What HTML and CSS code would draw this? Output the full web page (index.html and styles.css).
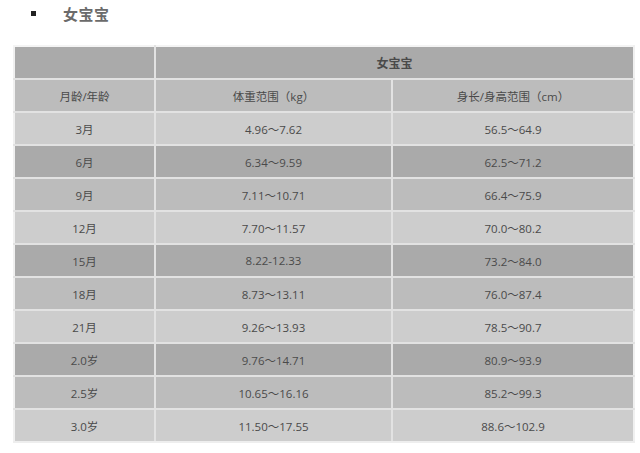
FILE: index.html
```html
<!DOCTYPE html>
<html>
<head>
<meta charset="utf-8">
<link rel="stylesheet" href="styles.css">
</head>
<body>
<div class="title"><span class="bullet"></span><span class="title-text">女宝宝</span></div>
<table class="data">
<colgroup><col class="c1"><col class="c2"><col class="c3"></colgroup>
<tr class="dark"><td></td><td colspan="2" class="bold">女宝宝</td></tr>
<tr class="mid"><td>月龄/年龄</td><td>体重范围（kg）</td><td>身长/身高范围（cm）</td></tr>
<tr class="light"><td>3月</td><td>4.96～7.62</td><td>56.5～64.9</td></tr>
<tr class="dark"><td>6月</td><td>6.34～9.59</td><td>62.5～71.2</td></tr>
<tr class="mid"><td>9月</td><td>7.11～10.71</td><td>66.4～75.9</td></tr>
<tr class="light"><td>12月</td><td>7.70～11.57</td><td>70.0～80.2</td></tr>
<tr class="dark"><td>15月</td><td>8.22-12.33</td><td>73.2～84.0</td></tr>
<tr class="mid"><td>18月</td><td>8.73～13.11</td><td>76.0～87.4</td></tr>
<tr class="light"><td>21月</td><td>9.26～13.93</td><td>78.5～90.7</td></tr>
<tr class="dark"><td>2.0岁</td><td>9.76～14.71</td><td>80.9～93.9</td></tr>
<tr class="mid"><td>2.5岁</td><td>10.65～16.16</td><td>85.2～99.3</td></tr>
<tr class="light"><td>3.0岁</td><td>11.50～17.55</td><td>88.6～102.9</td></tr>
</table>
</body>
</html>
```
FILE: styles.css
```css
html, body {
  margin: 0;
  padding: 0;
  background: #ffffff;
}
body {
  font-family: "Open Sans", "Noto Sans CJK SC", sans-serif;
  color: #444444;
}
.title {
  display: flex;
  align-items: center;
  height: 27px;
  padding-left: 31px;
}
.bullet {
  width: 5px;
  height: 5px;
  background: #222222;
  margin-right: 27px;
}
.title-text {
  font-family: "Noto Sans CJK SC", sans-serif;
  font-weight: bold;
  font-size: 15px;
  color: #6b6b6b;
  letter-spacing: 0.5px;
}
.data {
  margin: 18px 0 0 13px;
  border-collapse: collapse;
  width: 620px;
  table-layout: fixed;
  font-size: 11.5px;
}
.c1 { width: 141px; }
.c2 { width: 237px; }
.c3 { width: 242px; }
.data td {
  height: 31px;
  padding: 0;
  text-align: center;
  vertical-align: middle;
  border: 2px solid #e2e2e2;
  color: #4a4a4a;
}
.data tr:first-child td { border-top-color: #f4f4f4; }
.data td:first-child { border-left-color: #f0f0f0; }
.data td:last-child { border-right-color: #f0f0f0; }
.data tr:last-child td { border-bottom-color: #eeeeee; }
.bold {
  font-family: "Noto Sans CJK SC", sans-serif;
  font-weight: bold;
  font-size: 12px;
  color: #3a3a3a;
}
.dark td { background: #aaaaaa; }
.mid td { background: #bcbcbc; }
.light td { background: #cdcdcd; }
```
